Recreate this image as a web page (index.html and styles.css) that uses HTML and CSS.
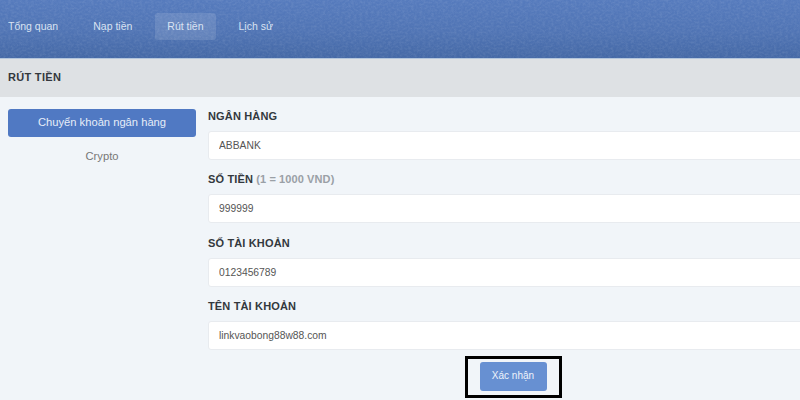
FILE: index.html
```html
<!DOCTYPE html>
<html lang="vi">
<head>
  <meta charset="UTF-8" />
  <meta name="viewport" content="width=device-width, initial-scale=1" />
  <title>Rút tiền</title>
  <link rel="stylesheet" href="styles.css">
</head>
<body>

  <!-- Navbar -->
  <nav class="topnav">
    <svg class="topnav-grain" aria-hidden="true">
      <filter id="grain">
        <feTurbulence type="fractalNoise" baseFrequency="0.35 0.5" numOctaves="3" seed="4" />
        <feColorMatrix values="0 0 0 0 1  0 0 0 0 1  0 0 0 0 1  0.9 0 0 0 -0.32" />
      </filter>
      <rect width="100%" height="100%" filter="url(#grain)" />
    </svg>
    <a class="topnav-link" href="#">Tổng quan</a>
    <a class="topnav-link" href="#">Nạp tiền</a>
    <a class="topnav-link active" href="#">Rút tiền</a>
    <a class="topnav-link" href="#">Lịch sử</a>
  </nav>

  <!-- Title -->
  <header class="page-title">RÚT TIỀN</header>

  <!-- Content -->
  <main class="content">
    <aside class="methods">
      <a class="method active" href="#">Chuyển khoản ngân hàng</a>
      <a class="method" href="#">Crypto</a>
    </aside>

    <form class="form">
      <label class="field">
        <span class="field-label">NGÂN HÀNG</span>
        <input class="field-input" type="text" value="ABBANK" />
      </label>
      <label class="field">
        <span class="field-label">SỐ TIỀN <span class="field-hint">(1 = 1000 VND)</span></span>
        <input class="field-input" type="text" value="999999" />
      </label>
      <label class="field">
        <span class="field-label">SỐ TÀI KHOẢN</span>
        <input class="field-input" type="text" value="0123456789" />
      </label>
      <label class="field">
        <span class="field-label">TÊN TÀI KHOẢN</span>
        <input class="field-input" type="text" value="linkvaobong88w88.com" />
      </label>
      <div class="submit-row">
        <div class="submit-mark">
          <button class="submit" type="button">Xác nhận</button>
        </div>
      </div>
    </form>
  </main>

</body>
</html>
```

FILE: styles.css
```css
/* Basic Reset */
* {
  margin: 0;
  padding: 0;
  box-sizing: border-box;
}

html, body {
  height: 400px;
  overflow: hidden;
}

body {
  font-family: "Liberation Sans", Arial, sans-serif;
  background: #f1f5f9;
  color: #333;
}

/* Navbar */
.topnav {
  position: relative;
  display: flex;
  align-items: center;
  gap: 11px;
  height: 59px;
  padding: 0 0 6px;
  background: linear-gradient(180deg, #567bbd 0%, #5074b4 55%, #4569a6 100%);
  border-bottom: 1px solid #b4c6dc;
}

.topnav-grain {
  position: absolute;
  top: 0;
  left: 0;
  width: 100%;
  height: 100%;
  opacity: 0.2;
  pointer-events: none;
}

.topnav-link {
  position: relative;
  display: block;
  padding: 0 12px;
  line-height: 27px;
  font-size: 10.5px;
  color: #d9e3f2;
  text-decoration: none;
  border-radius: 3px;
}

.topnav-link:first-of-type {
  padding-left: 8px;
}

.topnav-link.active {
  background: rgba(255, 255, 255, 0.12);
}

/* Title */
.page-title {
  height: 38px;
  padding-left: 8px;
  line-height: 37px;
  font-size: 11px;
  font-weight: bold;
  letter-spacing: 0.3px;
  color: #33383d;
  background: #dee1e4;
}

/* Content */
.content {
  display: flex;
  gap: 12px;
  padding: 12px 0 0 8px;
}

.methods {
  flex: none;
  display: flex;
  flex-direction: column;
  width: 188px;
}

.method {
  display: block;
  height: 28px;
  margin-bottom: 6px;
  line-height: 27px;
  text-align: center;
  font-size: 11.2px;
  color: #777;
  text-decoration: none;
  border-radius: 3px;
}

.method.active {
  color: #e6edf8;
  background: #5079c3;
}

/* Form */
.form {
  flex: none;
  width: 610px;
}

.field {
  display: block;
}

.field-label {
  display: block;
  height: 22px;
  line-height: 15px;
  font-size: 11px;
  font-weight: bold;
  letter-spacing: 0.15px;
  color: #33383d;
}

.field-hint {
  letter-spacing: 0.1px;
  color: #9aa0a6;
}

.field-input {
  display: block;
  width: 100%;
  height: 29px;
  margin-bottom: 12.4px;
  padding: 0 10px;
  font-family: inherit;
  font-size: 10.3px;
  color: #555;
  background: #fff;
  border: 1px solid #e8ebef;
  border-radius: 3px;
  outline: none;
}

.submit-row {
  display: flex;
  justify-content: center;
  margin-top: -6.6px;
}

.submit-mark {
  display: flex;
  align-items: center;
  justify-content: center;
  width: 97px;
  height: 42px;
  border: 3px solid #000;
}

.submit {
  width: 67px;
  height: 29px;
  padding-bottom: 2px;
  font-family: inherit;
  font-size: 10px;
  color: #eef3fb;
  background: #6790d2;
  border: none;
  border-radius: 3px;
}
```
